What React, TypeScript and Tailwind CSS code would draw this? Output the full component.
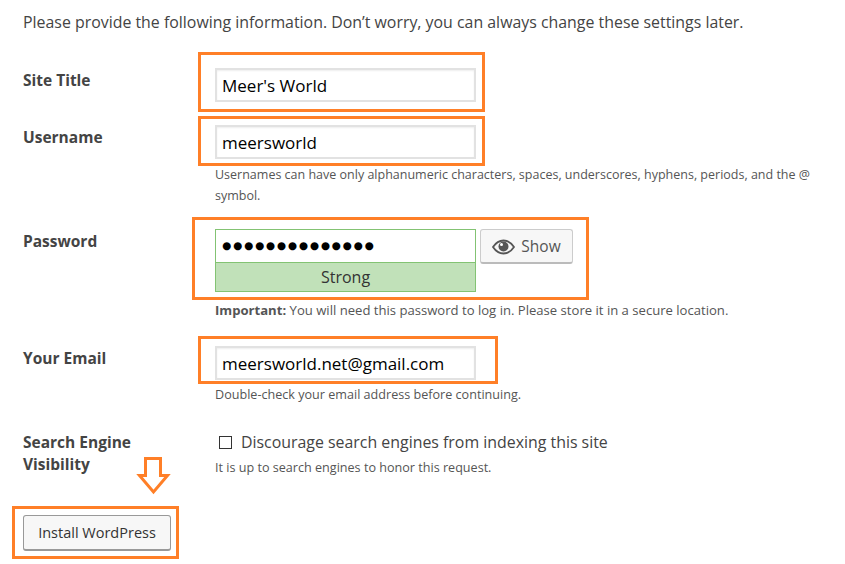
import React from 'react'

const Note = ({ className }: { className: string }) => (
  <div className={`absolute border-[3px] border-[#ff7f27] pointer-events-none ${className}`} />
)

const fieldClass =
  'block w-[261px] h-[34px] border-2 border-[#e2e2e2] bg-white pl-[5px] pr-2 text-[17px] text-black outline-none shadow-[inset_0_1px_2px_rgba(0,0,0,0.07)] font-["Open_Sans",sans-serif]'

const labelClass = 'shrink-0 text-[15.5px] leading-[22px] font-bold text-[#444]'
const hintClass = 'leading-[21px] text-[#555]'

const App = () => {
  return (
    <div className='w-[845px] h-[564px] overflow-hidden bg-white pl-[23px] pt-[10px] font-["Open_Sans",sans-serif] text-[#444]'>
      <p className="text-[15.9px] leading-[24px]">
        Please provide the following information. Don’t worry, you can always change these settings later.
      </p>

      <div className="mt-[34px] flex">
        <label className={`${labelClass} w-[192px] pt-[1px]`}>Site Title</label>
        <div className="relative">
          <input className={fieldClass} defaultValue="Meer's World" />
          <Note className="-left-[17px] -right-[9px] -top-[16px] -bottom-[10px]" />
        </div>
      </div>

      <div className="mt-[23px] flex">
        <label className={`${labelClass} w-[192px] pt-[1px]`}>Username</label>
        <div>
          <div className="relative w-[261px]">
            <input className={fieldClass} defaultValue="meersworld" />
            <Note className="-left-[17px] -right-[9px] -top-[9px] -bottom-[7px]" />
          </div>
          <p className={`${hintClass} w-[610px] mt-[5px] text-[12.5px]`}>
            Usernames can have only alphanumeric characters, spaces, underscores, hyphens, periods, and the @ symbol.
          </p>
        </div>
      </div>

      <div className="mt-[23px] flex">
        <label className={`${labelClass} w-[192px] pt-[1px]`}>Password</label>
        <div>
          <div className="relative flex w-[358px] items-start gap-[4px]">
            <div className="w-[261px] border border-[#83c373]">
              <div className="flex h-[32px] items-center pl-[6px] text-[10.5px] tracking-[1.8px] text-black font-['DejaVu_Sans',sans-serif]">
                ●●●●●●●●●●●●●●
              </div>
              <div className="h-[29px] border-t border-[#83c373] bg-[#c1e1b9] text-center text-[16px] leading-[28px] text-[#333]">
                Strong
              </div>
            </div>
            <button className="flex h-[35px] w-[93px] items-center justify-center gap-[6px] rounded-[3px] border border-[#ccc] border-b-[#bbb] border-b-2 bg-[#f7f7f7] pt-[1px] text-[15.5px] text-[#555]">
              <svg width="23" height="16" viewBox="0 0 23 16" fill="none">
                <path d="M1 8C4 3.5 7.5 1.5 11.500 1.500S19 3.500 22 8c-3 4.500-6.500 6.500-10.500 6.500S4 12.500 1 8z" stroke="#555" strokeWidth="1.800" />
                <circle cx="11.500" cy="7.500" r="5" fill="#555" />
                <circle cx="9.500" cy="5.500" r="1.500" fill="#fff" />
              </svg>
              Show
            </button>
            <Note className="-left-[23px] -right-[16px] -top-[12px] -bottom-[8px]" />
          </div>
          <p className={`${hintClass} mt-[8px] text-[13.1px]`}>
            <strong className="font-bold">Important:</strong> You will need this password to log in. Please store it in a secure location.
          </p>
        </div>
      </div>

      <div className="mt-[25px] flex">
        <label className={`${labelClass} w-[192px] pt-[1px]`}>Your Email</label>
        <div>
          <div className="relative w-[261px]">
            <input className={fieldClass} defaultValue="meersworld.net@gmail.com" />
            <Note className="-left-[17px] -right-[22px] -top-[10px] -bottom-[4px]" />
          </div>
          <p className={`${hintClass} mt-[4px] text-[12.6px]`}>Double-check your email address before continuing.</p>
        </div>
      </div>

      <div className="mt-[26px] flex">
        <label className={`${labelClass} w-[150px] mr-[42px]`}>Search Engine Visibility</label>
        <div>
          <div className="flex items-center gap-[9px] pl-[4px] text-[15.9px] leading-[22px]">
            <span className="h-[13px] w-[13px] border border-[#333] bg-white" />
            Discourage search engines from indexing this site
          </div>
          <p className={`${hintClass} mt-[4px] text-[12.6px]`}>It is up to search engines to honor this request.</p>
        </div>
      </div>

      <div className="relative mt-[37px] w-[148px]">
        <svg className="absolute left-[113px] -top-[58px]" width="36" height="38" viewBox="0 0 36 38" fill="none">
          <path d="M9.500 1.500h15v17h7L17.500 35 3.500 18.500h6z" stroke="#ff7f27" strokeWidth="3" />
        </svg>
        <button className="h-[36px] w-[148px] rounded-[3px] border border-[#999] border-b-2 bg-[#f7f7f7] text-[14.500px] text-[#333]">
          Install WordPress
        </button>
        <Note className="-left-[11px] -right-[8px] -top-[9px] -bottom-[8px]" />
      </div>
    </div>
  )
}

export default App
